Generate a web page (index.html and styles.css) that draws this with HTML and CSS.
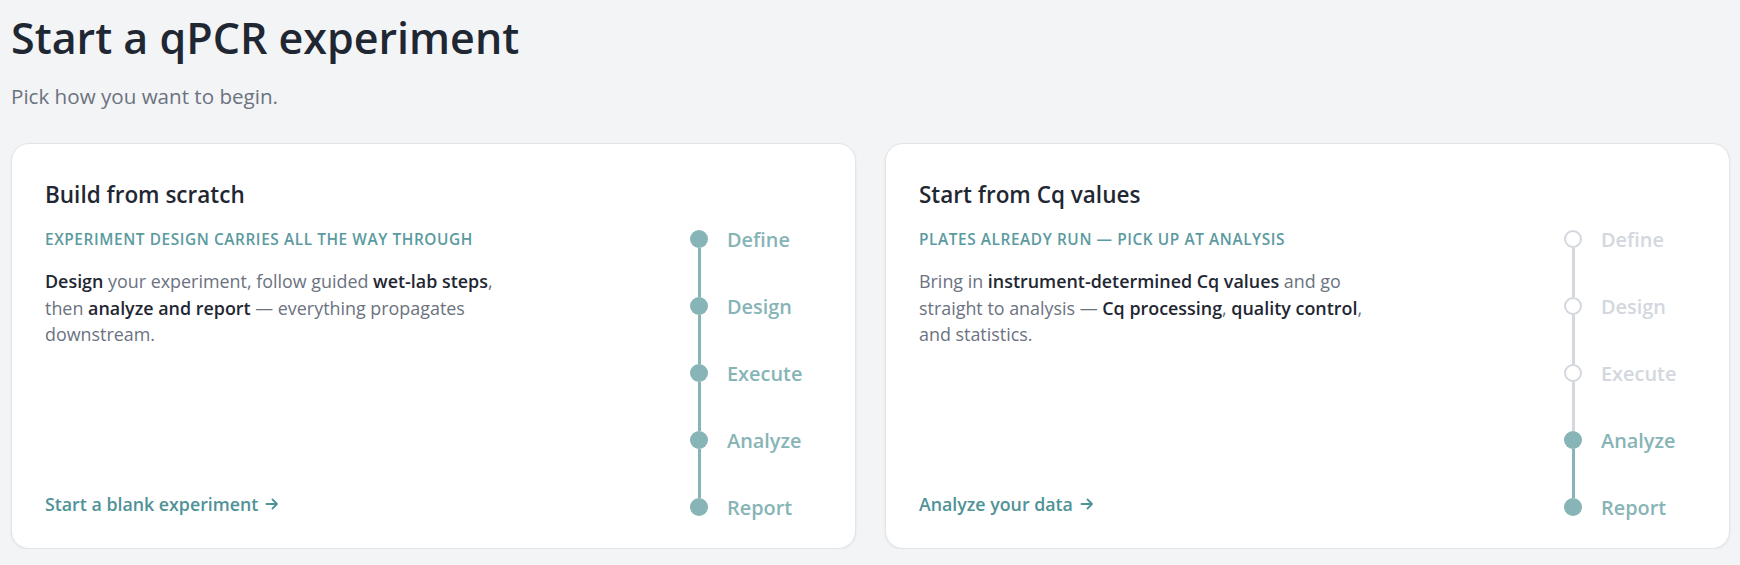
FILE: index.html
```html
<!DOCTYPE html>
<html lang="en">
<head>
  <meta charset="UTF-8">
  <title>Start a qPCR experiment</title>
  <link rel="stylesheet" href="styles.css">
</head>
<body>
  <main class="page">
    <h1 class="title">Start a qPCR experiment</h1>
    <p class="subtitle">Pick how you want to begin.</p>

    <div class="choices">
      <a class="choice" href="#">
        <div class="choice-body">
          <h2>Build from scratch</h2>
          <p class="eyebrow">Experiment design carries all the way through</p>
          <p class="summary"><strong>Design</strong> your experiment, follow guided <strong>wet-lab steps</strong>, then <strong>analyze and report</strong> — everything propagates downstream.</p>
          <span class="cta">Start a blank experiment
            <svg width="14" height="14" viewBox="0 0 14 14"><path d="M1.5 7h10.5M7.5 2.5 12 7l-4.5 4.5" fill="none" stroke="currentColor" stroke-width="1.8" stroke-linecap="round" stroke-linejoin="round"/></svg>
          </span>
        </div>
        <div class="steps">
          <div class="step"><span class="dot"></span>Define</div>
          <span class="rail"></span>
          <div class="step"><span class="dot"></span>Design</div>
          <span class="rail"></span>
          <div class="step"><span class="dot"></span>Execute</div>
          <span class="rail"></span>
          <div class="step"><span class="dot"></span>Analyze</div>
          <span class="rail"></span>
          <div class="step"><span class="dot"></span>Report</div>
        </div>
      </a>

      <a class="choice" href="#">
        <div class="choice-body">
          <h2>Start from Cq values</h2>
          <p class="eyebrow">Plates already run — pick up at analysis</p>
          <p class="summary">Bring in <strong>instrument-determined Cq values</strong> and go straight to analysis — <strong>Cq processing</strong>, <strong>quality control</strong>, and statistics.</p>
          <span class="cta">Analyze your data
            <svg width="14" height="14" viewBox="0 0 14 14"><path d="M1.5 7h10.5M7.5 2.5 12 7l-4.5 4.5" fill="none" stroke="currentColor" stroke-width="1.8" stroke-linecap="round" stroke-linejoin="round"/></svg>
          </span>
        </div>
        <div class="steps">
          <div class="step todo"><span class="dot"></span>Define</div>
          <span class="rail todo"></span>
          <div class="step todo"><span class="dot"></span>Design</div>
          <span class="rail todo"></span>
          <div class="step todo"><span class="dot"></span>Execute</div>
          <span class="rail todo"></span>
          <div class="step"><span class="dot"></span>Analyze</div>
          <span class="rail"></span>
          <div class="step"><span class="dot"></span>Report</div>
        </div>
      </a>
    </div>
  </main>
</body>
</html>
```

FILE: styles.css
```css
:root {
  --ink: #1f2733;
  --muted: #6b7280;
  --teal: #4f9297;
  --teal-soft: #87b4b6;
  --idle: #d3d7de;
}
body {
  margin: 0;
  background-color: #f3f4f6;
  font-family: "Open Sans", "Noto Sans", sans-serif;
  color: var(--ink);
}
.page {
  padding: 12px 10px 0 11px;
}
.title {
  margin: 0;
  font-size: 43px;
  line-height: 52px;
  font-weight: 600;
  color: var(--ink);
}
.subtitle {
  margin: 18px 0 0;
  font-size: 20.6px;
  line-height: 28px;
  color: var(--muted);
}
.choices {
  display: grid;
  grid-template-columns: 1fr 1fr;
  gap: 29px;
  margin-top: 33px;
}
.choice {
  display: flex;
  background-color: #fff;
  border: 1px solid #e1e4e9;
  border-radius: 18px;
  padding: 35px 33px 32px;
  box-shadow: 0 1px 3px rgba(16, 24, 40, 0.06);
  text-decoration: none;
  color: inherit;
}
.choice-body {
  flex: 1;
  display: flex;
  flex-direction: column;
}
.choice h2 {
  margin: 0;
  font-size: 22.5px;
  line-height: 32px;
  font-weight: 600;
  color: var(--ink);
}
.eyebrow {
  margin: 19px 0 0;
  font-size: 15.4px;
  line-height: 20px;
  font-weight: 600;
  letter-spacing: 0.58px;
  text-transform: uppercase;
  color: #5b9a9f;
}
.summary {
  margin: 18px 0 0;
  max-width: 460px;
  font-size: 17.9px;
  line-height: 26.5px;
  color: var(--muted);
}
.summary strong {
  font-weight: 600;
  color: var(--ink);
}
.cta {
  margin-top: auto;
  display: inline-flex;
  align-items: center;
  gap: 7px;
  font-size: 17.8px;
  line-height: 24px;
  font-weight: 600;
  color: var(--teal);
}
.steps {
  width: 132px;
  margin-top: 51px;
  display: flex;
  flex-direction: column;
}
.step {
  display: flex;
  align-items: center;
  gap: 19px;
  height: 18px;
  font-size: 19.9px;
  font-weight: 600;
  color: var(--teal-soft);
}
.dot {
  flex: none;
  box-sizing: border-box;
  width: 18px;
  height: 18px;
  border-radius: 50%;
  background-color: var(--teal-soft);
}
.rail {
  width: 3px;
  height: 49px;
  margin-left: 7.5px;
  background-color: var(--teal-soft);
}
.step.todo {
  color: var(--idle);
}
.step.todo .dot {
  background-color: #fff;
  border: 2.5px solid var(--idle);
}
.rail.todo {
  background-color: var(--idle);
}
```
